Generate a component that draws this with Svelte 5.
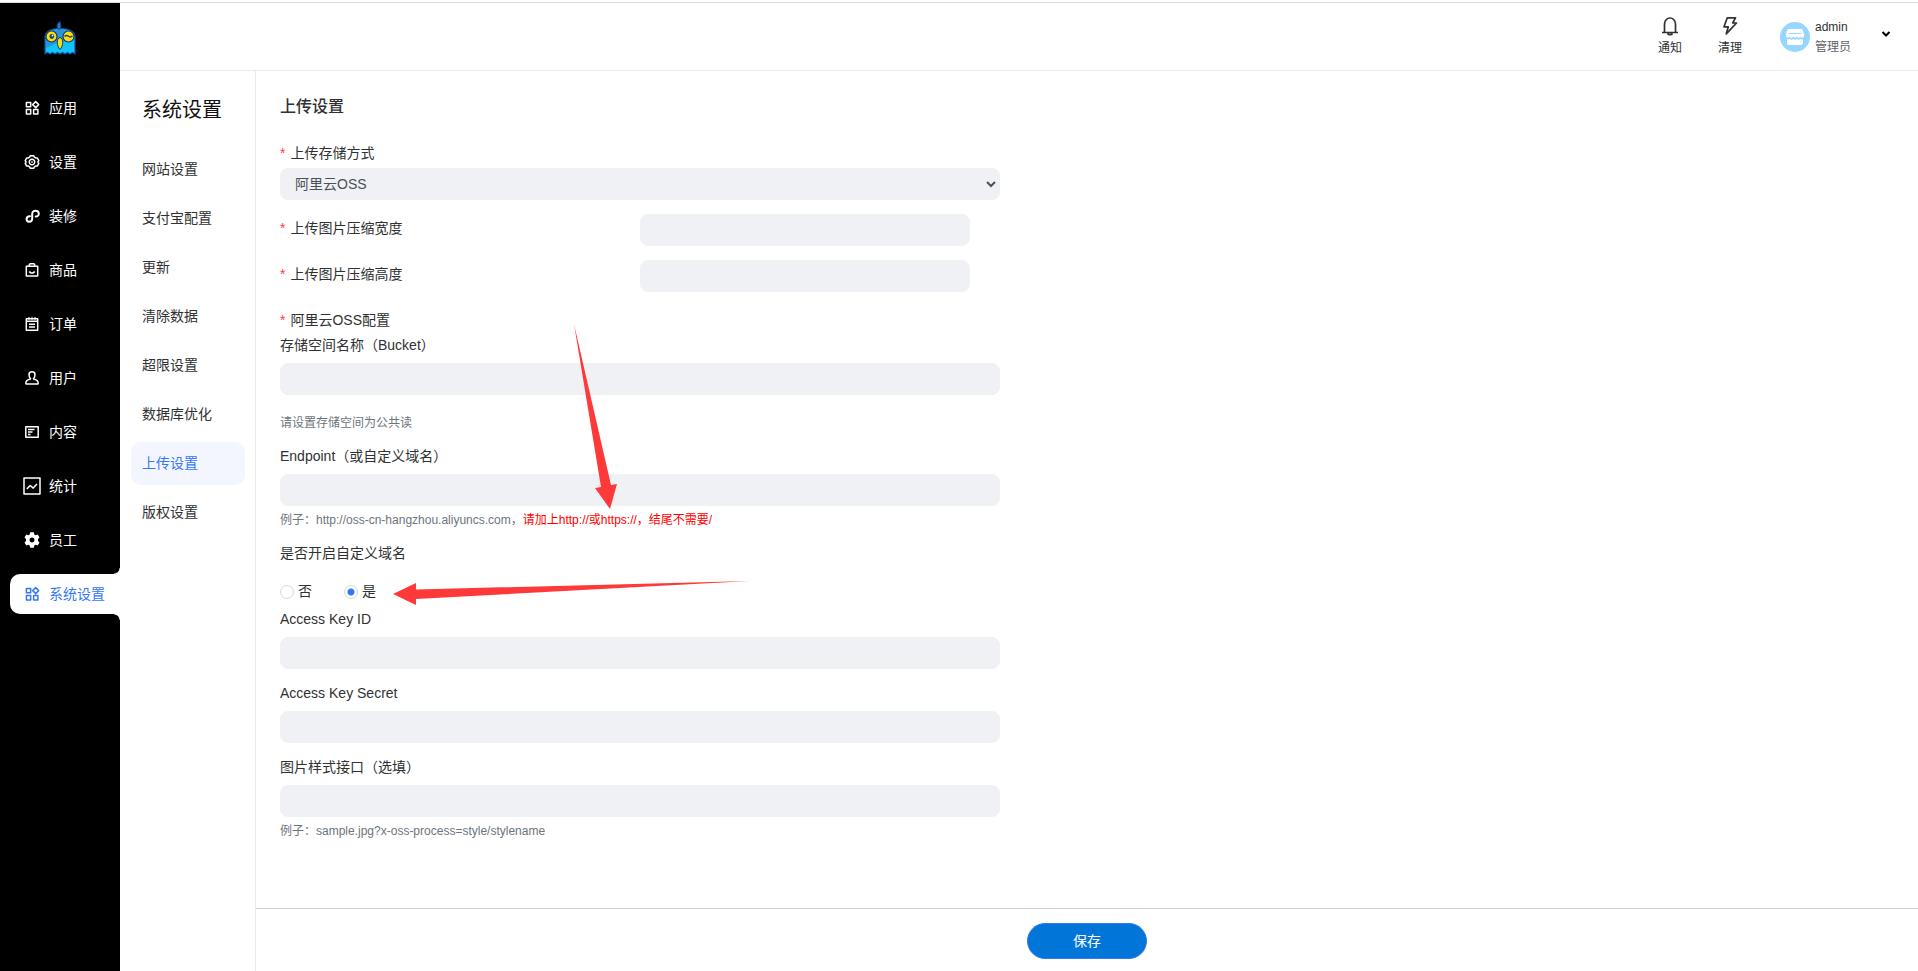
<script lang="ts">
	type MenuItem = { title: string; icon: string };

	const icons: Record<string, string> = {
		apps: 'M3.4 3.4h4.3v4.3H3.4z M3.4 10.6h4.3v4.3H3.4z M10.6 10.6h4.3v4.3h-4.3z M12.7 2.6l3 3-3 3-3-3z',
		settings:
			'M7.4 2.7h3.2l.8 1.5 1.2.7h1.7l1.5 2.7-.9 1.4.9 1.4-1.5 2.7h-1.7l-1.2.7-.8 1.5H7.4l-.8-1.5-1.2-.7H3.700l-1.500-2.700.9-1.400-.9-1.400 1.500-2.700h1.700l1.200-.7z M11.7 9a2.700 2.700 0 1 1-5.400 0 2.700 2.700 0 1 1 5.400 0z M8.300 9h1.400',
		design: 'M7 9.300C2.500 9.100 2.700 14.700 6 14.700c2 0 3.200-1.200 3.200-3.200V7c0-2 1.200-3.200 3.300-3.200 4.200 0 4.600 5.700.2 5.700',
		goods: 'M3.3 5.300h11.400v9.700H3.300z M6.300 5V3.700C6.300 3 6.800 2.700 7.500 2.700h3c.7 0 1.200.3 1.200 1V5 M6.300 10.500c1.200 2 4.200 2 5.400 0',
		orders: 'M3.300 3.800h11.400v11.400H3.300z M3.300 6.300h11.400 M6 2.300v2.500 M9 2.300v2.500 M12 2.300v2.500 M6 9.300h6 M6 12h6',
		users: 'M9 2.800c-1.900 0-3 1.300-3 3 0 1.900.7 3.200 1.600 4.200-2.700.5-4.800 1.500-4.800 4.200 0 .6.3.8.8.8h10.800c.5 0 .8-.2.8-.8 0-2.700-2.100-3.700-4.800-4.200C11.300 9 12 7.700 12 5.800c0-1.700-1.100-3-3-3z',
		content: 'M2.800 3.800h12.400v10.400H2.800z M5 6.600h6.500 M5 9h4.500 M5 11.500h2.500',
		stats: 'M1 1h16v16H1z M3.800 12l3.400-3.500 3 2.600L14 7',
		staff:
			'M7.200 1.300h3.600l.5 2.100 1.300.8 2.100-.6 1.800 3-1.500 1.500v1.800l1.500 1.500-1.800 3-2.100-.6-1.300.8-.5 2.100H7.200l-.5-2.100-1.300-.8-2.100.6-1.800-3L3 9.900V8.100L1.500 6.600l1.800-3 2.100.6 1.300-.8z M11.500 9a2.500 2.500 0 1 0-5 0 2.500 2.500 0 0 0 5 0z'
	};

	const menu: MenuItem[] = [
		{ title: '应用', icon: 'apps' },
		{ title: '设置', icon: 'settings' },
		{ title: '装修', icon: 'design' },
		{ title: '商品', icon: 'goods' },
		{ title: '订单', icon: 'orders' },
		{ title: '用户', icon: 'users' },
		{ title: '内容', icon: 'content' },
		{ title: '统计', icon: 'stats' },
		{ title: '员工', icon: 'staff' },
		{ title: '系统设置', icon: 'apps' }
	];

	const submenu = [
		'网站设置',
		'支付宝配置',
		'更新',
		'清除数据',
		'超限设置',
		'数据库优化',
		'上传设置',
		'版权设置'
	];

	let activeMenu = $state('系统设置');
	let activeSub = $state('上传设置');
	let storage = $state('oss');
	let customDomain = $state('1');
</script>

<div class="layout">
	<aside class="sidebar">
		<a href="#home" class="logo" aria-label="首页">
			<svg width="32" height="35" viewBox="0 0 32 35">
				<path
					d="M1 33V15C2 10 8 7.500 16 7.500S30 10 31 15v18l-2.500-1.500L26 33l-2.500-1.500L21 33l-2.500-1.500L16 33l-2.500-1.500L11 33l-2.500-1.500L6 33l-2.500-1.500z"
					fill="#0fc5fb"
					stroke="#11489a"
					stroke-width="1.2"
				/>
				<path d="M2 14C4 10 9 8 16 8s12 2 14 6l-5 7-9-1-9 5-5 2z" fill="#2895d8" />
				<path
					d="M15.500 8.500c-4-2.500-2.500-7 1-7.800-1 2.200 1.500 3-.5 7.800z"
					fill="#247bc1"
					stroke="#11489a"
				/>
				<circle cx="7.5" cy="15.5" r="5.5" fill="#fddc0b" stroke="#17375e" stroke-width="1.2" />
				<circle cx="24.5" cy="15.5" r="5.5" fill="#fddc0b" stroke="#17375e" stroke-width="1.2" />
				<circle cx="7.8" cy="15.5" r="2.4" fill="#174782" />
				<circle cx="8.5" cy="14.6" r=".8" fill="#fff" />
				<path
					d="M20.500 15.500c1.500-1.700 2.500-1.500 4-.3s2.600 1 4-.4"
					fill="none"
					stroke="#174782"
					stroke-width="1.4"
				/>
				<path
					d="M16 16.500c-3.800 1-3.400 8.500 0 12 3.400-3.500 3.800-11 0-12z"
					fill="#fddc0b"
					stroke="#17375e"
				/>
			</svg>
		</a>
		<nav class="menu">
			{#each menu as item (item.title)}
				<a
					href="#{item.title}"
					class="menu-item"
					class:active={activeMenu === item.title}
					onclick={() => (activeMenu = item.title)}
				>
					<svg
						class="menu-icon"
						class:solid={item.icon === 'staff'}
						class:bold={item.icon === 'design'}
						viewBox="0 0 18 18"
					>
						<path d={icons[item.icon]} />
					</svg>
					<span>{item.title}</span>
				</a>
			{/each}
		</nav>
	</aside>

	<div class="main">
		<header class="topbar">
			<button type="button" class="action">
				<svg width="18" height="20" viewBox="0 0 18 20">
					<path d="M1 16.500h16 M3.500 16.500V8a5.500 6 0 0 1 11 0v8.500 M6.500 17.500c1 1.600 4 1.600 5 0" />
				</svg>
				<span>通知</span>
			</button>
			<button type="button" class="action">
				<svg width="18" height="20" viewBox="0 0 18 20">
					<path d="M6.300 1.800h8.200L11.700 7H15.500L5.300 17.800l2-7H3z" />
				</svg>
				<span>清理</span>
			</button>
			<div class="account">
				<svg width="30" height="30" viewBox="0 0 30 30">
					<circle cx="15" cy="15" r="15" fill="#96d6ff" />
					<path
						d="M9 7h12c1 0 1.500.5 1.800 1.300L24 12v2.500c-1 1.500-2.500 1.500-3.600.2-1.200 1.300-2.500 1.300-3.600 0-1.200 1.300-2.500 1.300-3.600 0-1.200 1.300-2.500 1.300-3.600 0-1.100 1.300-2.600 1.300-3.600-.2V12l1.200-3.700C7.500 7.500 8 7 9 7z"
						fill="#fff"
					/>
					<path
						d="M7 17.300c1 .4 2 .2 2.700-.5 1.200 1.200 2.500 1.200 3.600 0 1.200 1.200 2.500 1.200 3.600 0 1.200 1.200 2.500 1.200 3.600 0 .7.7 1.500.9 2.500.5V21c0 1.200-.7 2-2 2H9c-1.300 0-2-.8-2-2z"
						fill="#fff"
					/>
					<path d="M9 11.500h12" stroke="#96d6ff" stroke-linecap="round" />
				</svg>
				<div class="account-text">
					<span>admin</span>
					<span class="role">管理员</span>
				</div>
			</div>
			<button type="button" class="more" aria-label="账户菜单">
				<svg width="10" height="8" viewBox="0 0 10 8">
					<path d="M1.500 2l3.500 3.500L8.500 2" fill="none" stroke="#000" stroke-width="2" />
				</svg>
			</button>
		</header>

		<div class="body">
			<aside class="submenu">
				<h2>系统设置</h2>
				<nav>
					{#each submenu as title (title)}
						<a
							href="#{title}"
							class:active={activeSub === title}
							onclick={() => (activeSub = title)}>{title}</a
						>
					{/each}
				</nav>
			</aside>

			<form class="content">
				<div class="fields">
					<h1>上传设置</h1>

					<label class="label required" for="storage">上传存储方式</label>
					<select id="storage" class="control" bind:value={storage}>
						<option value="local">本地</option>
						<option value="oss">阿里云OSS</option>
					</select>

					<div class="row">
						<label class="required" for="width">上传图片压缩宽度</label>
						<div><input id="width" class="control" type="text" /></div>
					</div>
					<div class="row">
						<label class="required" for="height">上传图片压缩高度</label>
						<div><input id="height" class="control" type="text" /></div>
					</div>

					<p class="group required">阿里云OSS配置</p>

					<div class="field">
						<label class="label" for="bucket">存储空间名称（Bucket）</label>
						<input id="bucket" class="control" type="text" />
						<p class="help spaced">请设置存储空间为公共读</p>
					</div>

					<div class="field">
						<label class="label" for="endpoint">Endpoint（或自定义域名）</label>
						<input id="endpoint" class="control" type="text" />
						<p class="help">
							例子：http://oss-cn-hangzhou.aliyuncs.com，<span class="warn"
								>请加上http://或https://，结尾不需要/</span
							>
						</p>
					</div>

					<fieldset>
						<legend>是否开启自定义域名</legend>
						<div class="radios">
							<label><input type="radio" value="0" bind:group={customDomain} />否</label>
							<label><input type="radio" value="1" bind:group={customDomain} />是</label>
						</div>
					</fieldset>

					<div class="field">
						<label class="label" for="key-id">Access Key ID</label>
						<input id="key-id" class="control" type="text" />
					</div>
					<div class="field">
						<label class="label" for="key-secret">Access Key Secret</label>
						<input id="key-secret" class="control" type="text" />
					</div>
					<div class="field">
						<label class="label" for="style">图片样式接口（选填）</label>
						<input id="style" class="control" type="text" />
						<p class="help">例子：sample.jpg?x-oss-process=style/stylename</p>
					</div>

					<svg class="arrows" width="360" height="290" viewBox="0 0 360 290" aria-hidden="true">
						<path d="M184 4l37 161 6-1-7 25-15-21 6-1z" />
						<path d="M360 261L26 269.500V263L3 274l23 11v-6z" />
					</svg>
				</div>

				<footer class="footer">
					<button type="button" class="save">保存</button>
				</footer>
			</form>
		</div>
	</div>
</div>

<style>
	:global(body) {
		background: #fff;
	}

	.layout {
		display: flex;
		box-sizing: border-box;
		min-height: 100vh;
		padding-top: 3px;
		font-family: 'Liberation Sans', 'Noto Sans CJK SC', sans-serif;
		font-size: 14px;
		line-height: 21px;
		color: #303133;
		background: linear-gradient(#dcdcdc, #dcdcdc) 0 2px / 100% 1px no-repeat;
	}

	h1,
	h2,
	p,
	fieldset,
	legend {
		margin: 0;
		padding: 0;
		border: 0;
	}

	a {
		color: inherit;
		text-decoration: none;
	}

	button,
	input,
	select {
		font: inherit;
	}

	.sidebar {
		flex: 0 0 120px;
		background: #000;
		color: #fff;
	}

	.logo {
		display: flex;
		justify-content: center;
		padding: 18px 0 32px;
	}

	.menu {
		display: flex;
		flex-direction: column;
		gap: 14px;
	}

	.menu-item {
		position: relative;
		display: flex;
		align-items: center;
		gap: 8px;
		height: 40px;
		margin-left: 10px;
		padding-left: 13px;
		border-radius: 10px 0 0 10px;
	}

	.menu-item.active {
		background: #fff;
		color: #3478f6;
	}

	/* inverted corners where the active tab joins the page */
	.menu-item.active::before,
	.menu-item.active::after {
		content: '';
		position: absolute;
		right: 0;
		width: 6px;
		height: 6px;
	}

	.menu-item.active::before {
		bottom: 100%;
		background: radial-gradient(circle at 0 0, #000 5px, #fff 6px);
	}

	.menu-item.active::after {
		top: 100%;
		background: radial-gradient(circle at 0 100%, #000 5px, #fff 6px);
	}

	.menu-icon {
		width: 18px;
		height: 18px;
		fill: none;
		stroke: currentColor;
		stroke-linejoin: round;
		stroke-width: 1.5;
	}

	.menu-icon.bold {
		stroke-linecap: round;
		stroke-width: 2;
	}

	.menu-icon.solid {
		fill: currentColor;
		fill-rule: evenodd;
		stroke: none;
	}

	.main {
		display: flex;
		flex: 1;
		flex-direction: column;
		min-width: 0;
	}

	.topbar {
		display: flex;
		align-items: flex-start;
		justify-content: flex-end;
		height: 67px;
		padding-right: 27px;
		border-bottom: 1px solid #ebebeb;
		font-size: 12px;
		line-height: 20px;
	}

	.action {
		display: flex;
		flex-direction: column;
		align-items: center;
		gap: 2px;
		width: 60px;
		padding: 13px 0 0;
		border: 0;
		background: none;
		color: inherit;
		cursor: pointer;
	}

	.action svg {
		fill: none;
		stroke: #303133;
		stroke-linejoin: round;
		stroke-width: 1.7;
	}

	.account {
		display: flex;
		gap: 5px;
		margin-left: 20px;
	}

	.account svg {
		margin-top: 19px;
	}

	.account-text {
		display: flex;
		flex-direction: column;
		padding-top: 14px;
	}

	.role {
		color: #606266;
	}

	.more {
		display: flex;
		margin: 27px 0 0 30px;
		padding: 0;
		border: 0;
		background: none;
		cursor: pointer;
	}

	.body {
		display: flex;
		flex: 1;
	}

	.submenu {
		box-sizing: border-box;
		flex: 0 0 136px;
		padding: 25px 10px 0 11px;
		border-right: 1px solid #ebebeb;
	}

	.submenu h2 {
		padding-left: 11px;
		font-size: 20px;
		font-weight: 400;
		line-height: 28px;
		color: #111;
	}

	.submenu nav {
		display: flex;
		flex-direction: column;
		gap: 6px;
		margin-top: 24px;
	}

	.submenu a {
		padding: 11px;
		border-radius: 10px;
	}

	.submenu a.active {
		background: #f3f6ff;
		color: #3478f6;
	}

	.content {
		display: flex;
		flex: 1;
		flex-direction: column;
		min-width: 0;
	}

	.fields {
		position: relative;
		box-sizing: border-box;
		flex: 1;
		max-width: 744px;
		padding: 24px 0 40px 24px;
	}

	h1 {
		margin-bottom: 24px;
		font-size: 16px;
		font-weight: 500;
		line-height: 24px;
	}

	.label {
		display: block;
		margin-bottom: 7px;
	}

	.required::before {
		content: '*';
		margin-right: 5px;
		color: #ff3b3b;
	}

	.label.required {
		margin-bottom: 4px;
	}

	.control {
		display: block;
		box-sizing: border-box;
		width: 100%;
		height: 32px;
		padding: 0 10px;
		border: 1px solid #f0f1f5;
		border-radius: 8px;
		background: #f0f1f5;
		color: #495057;
	}

	select.control {
		padding-right: 0;
	}

	.row {
		display: grid;
		grid-template-columns: 1fr 1fr;
		margin-top: 14px;
		line-height: 28px;
	}

	.row div {
		padding-right: 30px;
	}

	.group {
		margin: 18px 0 4px;
	}

	.field + .field {
		margin-top: 14px;
	}

	.help {
		margin-top: 5px;
		font-size: 12px;
		line-height: 18px;
		color: #6c757d;
	}

	.help.spaced {
		margin-top: 19px;
	}

	.warn {
		color: #f00;
	}

	fieldset {
		margin: 14px 0 7px;
	}

	.radios {
		display: flex;
		gap: 32px;
		margin-top: 17px;
	}

	.radios label {
		display: flex;
		align-items: center;
		gap: 4px;
	}

	.radios input {
		appearance: none;
		width: 14px;
		height: 14px;
		margin: 0;
		border: 1px solid #d4d6dc;
		border-radius: 50%;
	}

	.radios input:checked {
		background: radial-gradient(circle, #3478f6 3px, #fff 4px);
	}

	.arrows {
		position: absolute;
		top: 249px;
		left: 134px;
		fill: #fd3a39;
		pointer-events: none;
	}

	.footer {
		display: flex;
		justify-content: center;
		padding: 14px 0 12px;
		border-top: 1px solid #cfd0d6;
	}

	.save {
		width: 120px;
		height: 36px;
		padding: 0;
		border: 1px solid #3478f6;
		border-radius: 18px;
		background: #0275d8;
		color: #fff;
		cursor: pointer;
	}
</style>
